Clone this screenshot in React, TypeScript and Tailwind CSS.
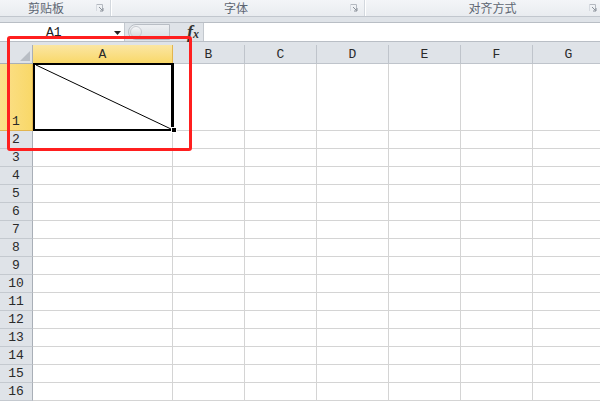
import React from "react"

const cols = ["B", "C", "D", "E", "F", "G"]
const rows = Array.from({ length: 15 }, (_, i) => i + 2)

function Launcher() {
  return (
    <svg width="8" height="8" viewBox="0 0 8 8" className="shrink-0">
      <path d="M0.5 0.5h6v6" fill="none" stroke="#b4b9c0" />
      <path d="M0.5 0.5v6.5" fill="none" stroke="#d6dae0" />
      <path d="M3 3l3.5 3.5M4 7h3V4" fill="none" stroke="#8a9099" />
    </svg>
  )
}

export default function App() {
  return (
    <div className="relative w-[600px] h-[401px] overflow-hidden bg-white font-['Liberation_Mono',monospace]">
      {/* ribbon group labels */}
      <div className="flex h-[17px] bg-gradient-to-b from-[#f3f5f8] to-[#e9ecf0] border-b border-[#c2c7ce] text-[12px] text-[#5d6672] font-['Noto_Sans_CJK_SC',sans-serif] leading-[16px]">
        <div className="w-[111px] flex items-center justify-between pl-[28px] pr-[6px] border-r border-[#d3d8de]">
          <span>剪贴板</span>
          <Launcher />
        </div>
        <div className="w-[254px] flex items-center pr-[6px] border-r border-[#d3d8de] border-l border-l-white">
          <span className="flex-1 text-center pl-[10px]">字体</span>
          <Launcher />
        </div>
        <div className="flex-1 flex items-center pr-[3px] border-l border-white">
          <span className="flex-1 text-center pl-[30px]">对齐方式</span>
          <Launcher />
        </div>
      </div>
      <div className="h-[5px] bg-[#dfe3e8]" />

      {/* formula bar */}
      <div className="flex h-[19px] bg-[#dfe3e8] border-t border-[#b9bec5]">
        <div className="w-[125px] bg-white flex items-center border-r border-[#c3c8ce] relative">
          <span className="pl-[46px] text-[13px] text-[#222] leading-none">A1</span>
          <svg width="7" height="4" viewBox="0 0 7 4" className="absolute left-[114px] top-[8px]">
            <path d="M0 0h7L3.5 4z" fill="#222" />
          </svg>
        </div>
        <div className="w-[78px] flex items-center pl-[3px]">
          <div className="w-[42px] h-[16px] rounded-l-full border border-[#b8bdc4] bg-gradient-to-b from-[#eef0f3] to-[#d9dde2] flex items-center pl-[1px]">
            <div className="w-[12px] h-[12px] rounded-full bg-gradient-to-b from-[#f7f8fa] to-[#d2d6dc] border border-[#c6cad0]" />
          </div>
          <span className="ml-auto mr-[4px] font-['Liberation_Serif',serif] italic font-bold text-[18px] text-[#333] leading-none">
            f<span className="text-[12px]">x</span>
          </span>
        </div>
        <div className="flex-1 bg-white border-l border-[#c3c8ce]" />
      </div>
      <div className="h-[4px] bg-[#dfe3e8] border-t border-[#b9bec5]" />

      {/* sheet */}
      <div className="text-[13px] text-[#2a2a2a]">
        <div className="flex h-[19px]">
          <div className="w-[33px] shrink-0 bg-[#dfe3e8] border-r border-b border-[#a9afb7] flex items-end justify-end p-[2px]">
            <svg width="10" height="10" viewBox="0 0 10 10">
              <path d="M10 0v10H0z" fill="#b8bdc4" />
            </svg>
          </div>
          <div className="w-[140px] shrink-0 bg-gradient-to-b from-[#fbe6a2] to-[#f9d868] border-r border-b border-[#e2b54f] flex items-center justify-center pt-[1px]">
            A
          </div>
          {cols.map((c) => (
            <div
              key={c}
              className="w-[72px] shrink-0 bg-[#dfe3e8] border-r border-b border-[#bfc4cb] flex items-center justify-center pt-[1px]"
            >
              {c}
            </div>
          ))}
        </div>

        <div className="flex h-[67px]">
          <div className="w-[33px] shrink-0 bg-gradient-to-r from-[#fbe08a] to-[#f9d868] border-r border-b border-[#e2b54f] flex items-end justify-center leading-[17px]">
            1
          </div>
          <div className="w-[140px] shrink-0 border-r border-b border-[#d4d4d4]" />
          {cols.map((c) => (
            <div key={c} className="w-[72px] shrink-0 border-r border-b border-[#d4d4d4]" />
          ))}
        </div>

        {rows.map((r) => (
          <div key={r} className="flex h-[18px]">
            <div className="w-[33px] shrink-0 bg-[#dfe3e8] border-r border-b border-[#a9afb7] border-b-[#c4c9cf] flex items-end justify-center leading-[17px]">
              {r}
            </div>
            <div className="w-[140px] shrink-0 border-r border-b border-[#d4d4d4]" />
            {cols.map((c) => (
              <div key={c} className="w-[72px] shrink-0 border-r border-b border-[#d4d4d4]" />
            ))}
          </div>
        ))}
      </div>

      {/* selected A1 with diagonal */}
      <div className="absolute left-[33px] top-[63px] w-[141px] h-[68px] border-2 border-black border-r-[3px]">
        <svg className="absolute inset-0" width="136" height="64" viewBox="0 0 136 64">
          <line x1="1" y1="0" x2="136" y2="64" stroke="#000" strokeWidth="1" />
        </svg>
      </div>
      <div className="absolute left-[171px] top-[127px] w-[6px] h-[6px] bg-black border border-white" />

      {/* red highlight */}
      <div className="absolute left-[7px] top-[36px] w-[185px] h-[115px] border-[3px] border-[#ff1f1f] rounded-[3px]" />
    </div>
  )
}
